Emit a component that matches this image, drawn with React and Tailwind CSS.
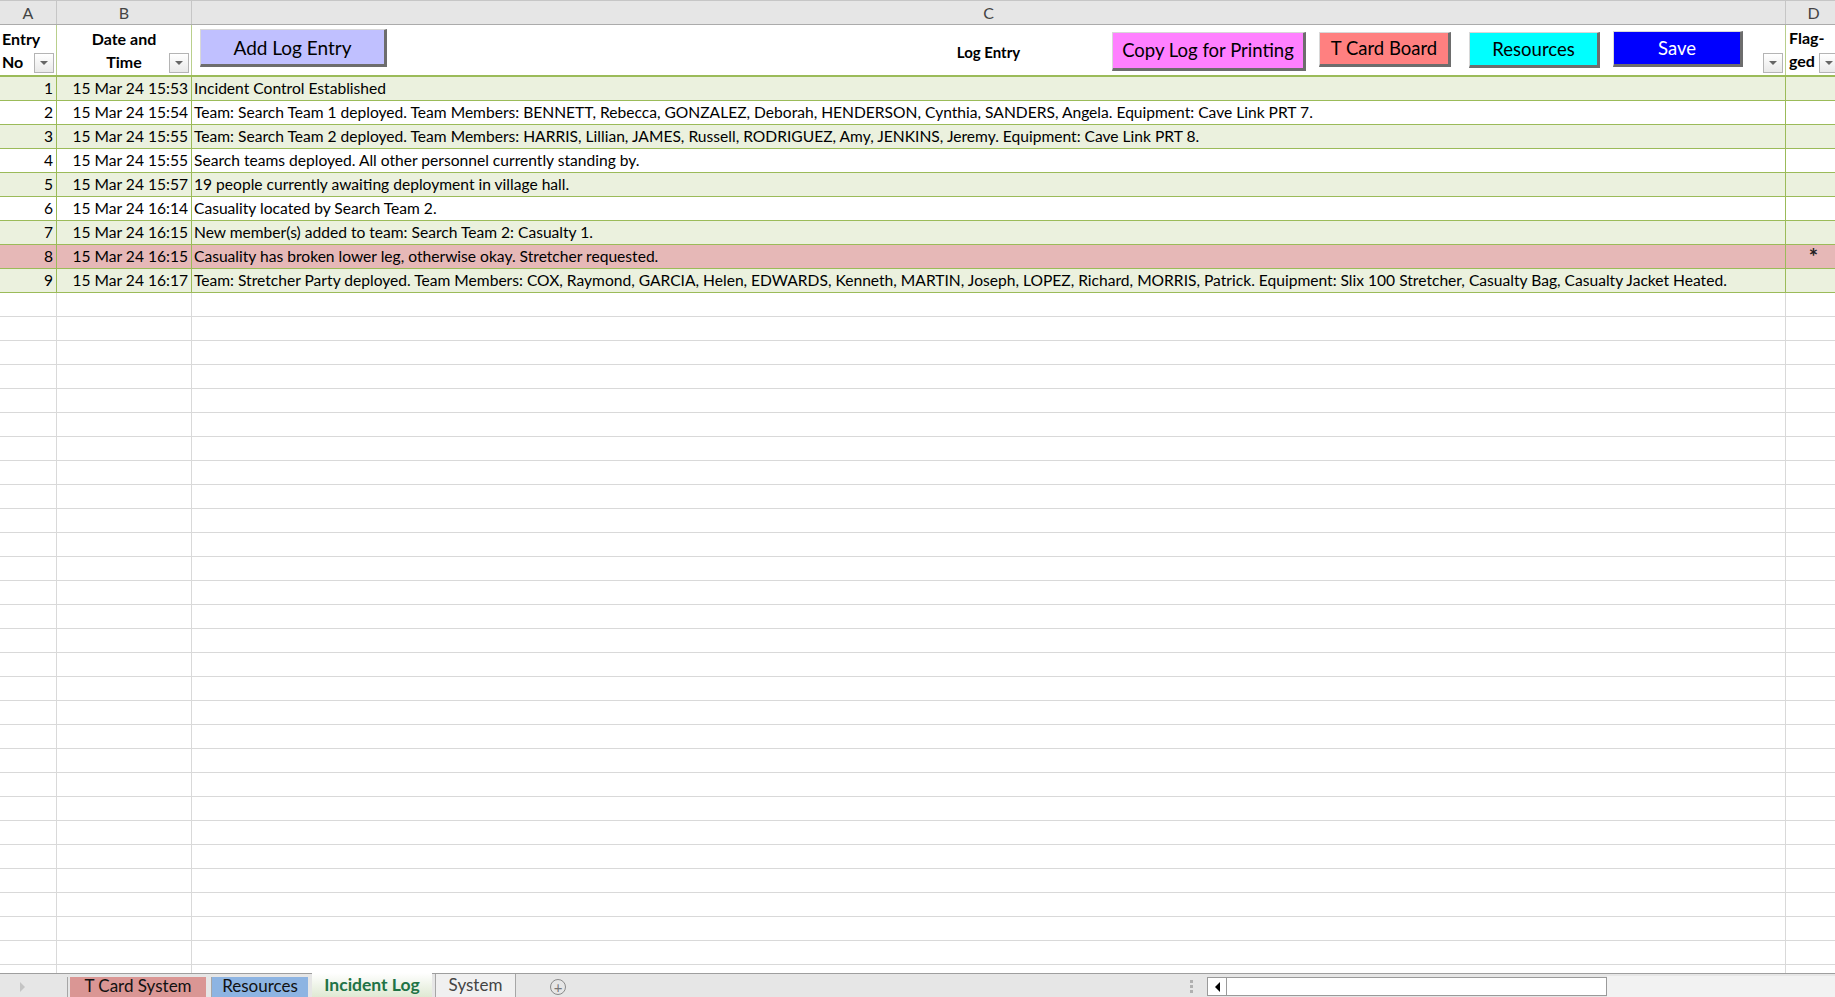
import React from "react";

const rows = [
  [1, "15 Mar 24 15:53", "Incident Control Established", ""],
  [2, "15 Mar 24 15:54", "Team: Search Team 1 deployed. Team Members: BENNETT, Rebecca, GONZALEZ, Deborah, HENDERSON, Cynthia, SANDERS, Angela. Equipment: Cave Link PRT 7.", ""],
  [3, "15 Mar 24 15:55", "Team: Search Team 2 deployed. Team Members: HARRIS, Lillian, JAMES, Russell, RODRIGUEZ, Amy, JENKINS, Jeremy. Equipment: Cave Link PRT 8.", ""],
  [4, "15 Mar 24 15:55", "Search teams deployed. All other personnel currently standing by.", ""],
  [5, "15 Mar 24 15:57", "19 people currently awaiting deployment in village hall.", ""],
  [6, "15 Mar 24 16:14", "Casuality located by Search Team 2.", ""],
  [7, "15 Mar 24 16:15", "New member(s) added to team: Search Team 2: Casualty 1.", ""],
  [8, "15 Mar 24 16:15", "Casuality has broken lower leg, otherwise okay. Stretcher requested.", "*"],
  [9, "15 Mar 24 16:17", "Team: Stretcher Party deployed. Team Members: COX, Raymond, GARCIA, Helen, EDWARDS, Kenneth, MARTIN, Joseph, LOPEZ, Richard, MORRIS, Patrick. Equipment: Slix 100 Stretcher, Casualty Bag, Casualty Jacket Heated.", ""],
];

function FilterButton() {
  return (
    <div className="absolute right-[2px] bottom-[2px] w-[20px] h-[20px] border border-[#b4b4b4] bg-gradient-to-b from-white to-[#e9e9e9] flex items-center justify-center">
      <div className="w-0 h-0 border-l-[4px] border-r-[4px] border-t-[4px] border-l-transparent border-r-transparent border-t-[#666]" />
    </div>
  );
}

function SheetButton({ label, className, textClass = "text-black" }) {
  return (
    <div
      className={`flex items-center justify-center border-t border-l border-t-[#d8d8d8] border-l-[#d8d8d8] border-r-[3px] border-b-[3px] border-r-[#6d6d6d] border-b-[#6d6d6d] ${className} ${textClass}`}
    >
      {label}
    </div>
  );
}

export default function App() {
  return (
    <div className="h-screen w-full flex flex-col overflow-hidden bg-white [font-family:Lato,'Liberation_Sans',sans-serif] text-black">
      {/* column letters */}
      <div className="flex h-[25px] shrink-0 bg-[#e6e6e6] border-t border-t-[#c6c6c6] border-b border-b-[#ababab] text-[#444] text-[16px]">
        <div className="w-[57px] shrink-0 border-r border-[#c6c6c6] flex items-center justify-center">A</div>
        <div className="w-[135px] shrink-0 border-r border-[#c6c6c6] flex items-center justify-center">B</div>
        <div className="w-[1594px] shrink-0 border-r border-[#c6c6c6] flex items-center justify-center">C</div>
        <div className="w-[56px] shrink-0 border-r border-[#c6c6c6] flex items-center justify-center">D</div>
        <div className="flex-1" />
      </div>

      <div className="flex-1 overflow-hidden">
        {/* header row */}
        <div className="flex h-[52px] border-b-2 border-b-[#9bbb59] font-bold text-[16px] leading-[23px]">
          <div className="relative w-[57px] shrink-0 border-r border-[#b9cf8c] pl-[2px] pt-[2px]">
            <div>Entry</div>
            <div>No</div>
            <FilterButton />
          </div>
          <div className="relative w-[135px] shrink-0 border-r border-[#b9cf8c] pt-[2px] text-center">
            <div>Date and</div>
            <div>Time</div>
            <FilterButton />
          </div>
          <div className="relative w-[1594px] shrink-0 border-r border-[#b9cf8c] flex items-center justify-center pt-[4px] text-[15px]">
            <span>Log Entry</span>
            <div className="absolute inset-0 flex items-start font-normal">
              <SheetButton label="Add Log Entry" className="ml-[8px] mt-[4px] w-[187px] h-[38px] bg-[#c0c0ff] text-[19px]" />
              <div className="flex-1" />
              <SheetButton label="Copy Log for Printing" className="mt-[7px] w-[194px] h-[39px] bg-[#ff80ff] text-[18.5px]" />
              <SheetButton label="T Card Board" className="ml-[13px] mt-[7px] w-[132px] h-[35px] bg-[#ff8080] text-[18.5px]" />
              <SheetButton label="Resources" className="ml-[18px] mt-[7px] w-[131px] h-[36px] bg-[#00ffff] text-[18.5px]" />
              <SheetButton label="Save" className="ml-[13px] mt-[6px] w-[130px] h-[36px] bg-[#0000ff] text-[18.5px]" textClass="text-white" />
              <div className="w-[42px]" />
            </div>
            <FilterButton />
          </div>
          <div className="relative w-[56px] shrink-0 border-r border-[#b9cf8c] pl-[3px] pt-[1px]">
            <div>Flag-</div>
            <div>ged</div>
            <FilterButton />
          </div>
          <div className="flex-1" />
        </div>

        {/* data rows */}
        {rows.map(([no, date, text, flag]) => {
          const bg = no === 8 ? "bg-[#e6b8b7]" : no % 2 === 1 ? "bg-[#ebf1de]" : "bg-white";
          return (
            <div key={no} className={`flex h-[24px] border-b border-b-[#9bbb59] text-[15.6px] leading-[23px] ${bg}`}>
              <div className="w-[57px] shrink-0 border-r border-[#9bbb59] text-right pr-[3px]">{no}</div>
              <div className="w-[135px] shrink-0 border-r border-[#9bbb59] text-right pr-[3px] whitespace-nowrap">{date}</div>
              <div className="w-[1594px] shrink-0 border-r border-[#9bbb59] pl-[2px] whitespace-nowrap overflow-hidden">{text}</div>
              <div className="w-[56px] shrink-0 border-r border-[#9bbb59] text-center font-bold text-[22px] leading-[24px] text-[#222]">{flag}</div>
              <div className="flex-1 bg-white" />
            </div>
          );
        })}

        {/* empty rows */}
        {Array.from({ length: 30 }).map((_, i) => (
          <div key={i} className="flex h-[24px] border-b border-b-[#d9d9d9]">
            <div className="w-[57px] shrink-0 border-r border-[#d9d9d9]" />
            <div className="w-[135px] shrink-0 border-r border-[#d9d9d9]" />
            <div className="w-[1594px] shrink-0 border-r border-[#d9d9d9]" />
            <div className="w-[56px] shrink-0 border-r border-[#d9d9d9]" />
            <div className="flex-1" />
          </div>
        ))}
      </div>

      {/* sheet tabs */}
      <div className="flex h-[24px] shrink-0 border-t border-t-[#9e9e9e] bg-[#e6e6e6] text-[17px] leading-[18px]">
        <div className="w-[68px] shrink-0 flex items-center justify-start pl-[20px] border-r border-[#a6a6a6] mt-[3px]">
          <div className="w-0 h-0 border-t-[5px] border-b-[5px] border-l-[5px] border-t-transparent border-b-transparent border-l-[#c4c4c4]" />
        </div>
        <div className="ml-[2px] mt-[3px] pb-[3px] w-[136px] bg-[#da9694] text-[#111] flex items-center justify-center">T Card System</div>
        <div className="ml-[5px] mt-[3px] pb-[3px] w-[97px] bg-[#8db4e2] text-[#111] flex items-center justify-center border-l border-[#a6a6a6]">Resources</div>
        <div className="ml-[4px] -mt-[1px] pb-[1px] w-[120px] bg-gradient-to-b from-white to-[#dfe9d3] text-[#217346] text-[17.5px] font-bold flex items-center justify-center">Incident Log</div>
        <div className="ml-[3px] pb-[2px] w-[81px] bg-[#f0f0f0] border-l border-[#a6a6a6] text-[#444] flex items-center justify-center border-r">System</div>
        <div className="ml-[34px] flex items-center">
          <div className="w-[16px] h-[16px] rounded-full border border-[#8a8a8a] flex items-center justify-center text-[#777] text-[15px] leading-none mt-[3px]">+</div>
        </div>
        <div className="ml-[624px] flex flex-col justify-center gap-[2px] pt-[2px]">
          <div className="w-[3px] h-[3px] bg-[#b0b0b0]" />
          <div className="w-[3px] h-[3px] bg-[#b0b0b0]" />
          <div className="w-[3px] h-[3px] bg-[#b0b0b0]" />
        </div>
        <div className="ml-[14px] mt-[3px] w-[400px] h-[19px] border border-[#9a9a9a] bg-white flex">
          <div className="w-[19px] h-full border-r border-[#9a9a9a] flex items-center justify-center">
            <div className="w-0 h-0 border-t-[5px] border-b-[5px] border-r-[5px] border-t-transparent border-b-transparent border-r-black" />
          </div>
        </div>
        <div className="flex-1 bg-[#f2f2f2] mt-[2px]" />
      </div>
    </div>
  );
}
